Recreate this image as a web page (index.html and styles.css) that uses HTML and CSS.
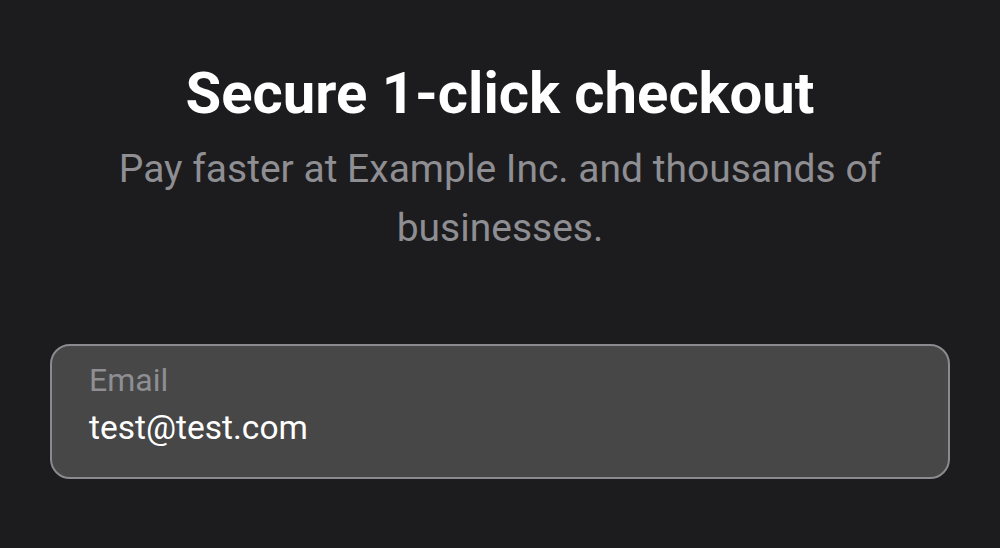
FILE: index.html
```html
<!DOCTYPE html>
<html>
<head>
<meta charset="utf-8">
<link rel="stylesheet" href="styles.css">
</head>
<body>
<main class="page">
  <h1 class="title">Secure 1-click checkout</h1>
  <p class="subtitle">Pay faster at Example Inc. and thousands of businesses.</p>
  <div class="field">
    <span class="label">Email</span>
    <span class="value">test@test.com</span>
  </div>
</main>
</body>
</html>
```

FILE: styles.css
```css
html, body {
  margin: 0;
  padding: 0;
  background: #1c1c1e;
  font-family: Roboto, "Liberation Sans", sans-serif;
}
.page {
  width: 1000px;
  height: 548px;
  box-sizing: border-box;
  padding: 59px 50px 0 50px;
  display: flex;
  flex-direction: column;
  align-items: center;
}
.title {
  margin: 0;
  color: #ffffff;
  font-weight: 700;
  font-size: 58px;
  line-height: 68px;
  text-align: center;
}
.subtitle {
  margin: 13px 0 0 0;
  width: 820px;
  color: #8e8e93;
  font-size: 39px;
  line-height: 59px;
  text-align: center;
}
.field {
  margin-top: 86px;
  align-self: stretch;
  box-sizing: border-box;
  height: 135px;
  background: #474747;
  border: 2px solid #8a8a8f;
  border-radius: 20px;
  padding: 14px 37px;
  display: flex;
  flex-direction: column;
}
.label {
  color: #8e8e93;
  font-size: 32px;
  line-height: 40px;
}
.value {
  margin-top: 4px;
  color: #ffffff;
  font-size: 33.5px;
  line-height: 48px;
}
```
